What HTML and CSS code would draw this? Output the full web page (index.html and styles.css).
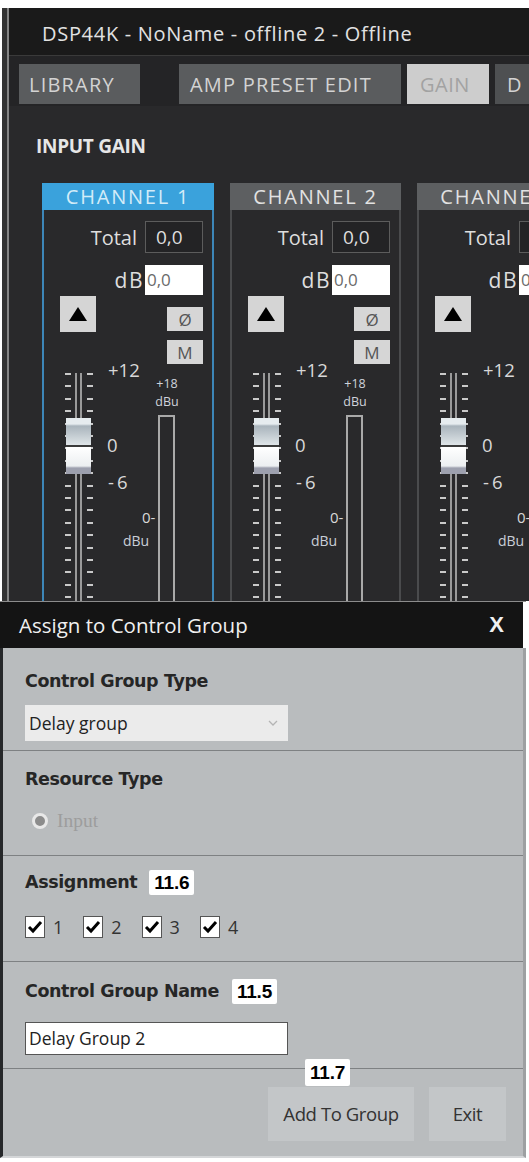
FILE: index.html
```html
<!DOCTYPE html>
<html lang="en">
<head>
    <meta charset="UTF-8">
    <meta name="viewport" content="width=device-width, initial-scale=1.0">
    <title>DSP44K - Assign to Control Group</title>
    <link rel="stylesheet" href="styles.css">
</head>
<body>
    <div class="app">
        <div class="app-inner">
            <div class="titlebar">DSP44K - NoName - offline 2 - Offline</div>
            <div class="tabs">
                <div class="tab tab-library">LIBRARY</div>
                <div class="tab tab-amp">AMP PRESET EDIT</div>
                <div class="tab tab-gain">GAIN</div>
                <div class="tab tab-more">D</div>
            </div>
            <div class="gain-panel">
                <h3 class="panel-title">INPUT GAIN</h3>
                <div class="channels">

                    <div class="channel active">
                        <div class="ch-header">CHANNEL 1</div>
                        <div class="ch-body">
                            <div class="ch-row">
                                <span class="ch-label">Total</span>
                                <span class="total-box">0,0</span>
                            </div>
                            <div class="ch-row ch-row-db">
                                <span class="ch-label">dB</span>
                                <span class="db-input">0,0</span>
                            </div>
                            <div class="ch-controls">
                                <span class="up-btn"><svg width="20" height="16" viewBox="0 0 20 16"><path d="M10 1 L19 15 L1 15 Z" fill="#000"/></svg></span>
                                <div class="small-btns">
                                    <span class="small-btn">Ø</span>
                                    <span class="small-btn">M</span>
                                </div>
                            </div>
                            <div class="fader">
                                <div class="ticks ticks-left"></div>
                                <div class="rail"></div>
                                <div class="ticks ticks-right"></div>
                                <div class="knob"></div>
                                <span class="scale s-12">+12</span>
                                <span class="scale s-0">0</span>
                                <span class="scale s-6">-6</span>
                                <span class="meter-top">+18<br>dBu</span>
                                <div class="meter"></div>
                                <span class="meter-zero">0-</span>
                                <span class="meter-unit">dBu</span>
                            </div>
                        </div>
                    </div>

                    <div class="channel">
                        <div class="ch-header">CHANNEL 2</div>
                        <div class="ch-body">
                            <div class="ch-row">
                                <span class="ch-label">Total</span>
                                <span class="total-box">0,0</span>
                            </div>
                            <div class="ch-row ch-row-db">
                                <span class="ch-label">dB</span>
                                <span class="db-input">0,0</span>
                            </div>
                            <div class="ch-controls">
                                <span class="up-btn"><svg width="20" height="16" viewBox="0 0 20 16"><path d="M10 1 L19 15 L1 15 Z" fill="#000"/></svg></span>
                                <div class="small-btns">
                                    <span class="small-btn">Ø</span>
                                    <span class="small-btn">M</span>
                                </div>
                            </div>
                            <div class="fader">
                                <div class="ticks ticks-left"></div>
                                <div class="rail"></div>
                                <div class="ticks ticks-right"></div>
                                <div class="knob"></div>
                                <span class="scale s-12">+12</span>
                                <span class="scale s-0">0</span>
                                <span class="scale s-6">-6</span>
                                <span class="meter-top">+18<br>dBu</span>
                                <div class="meter"></div>
                                <span class="meter-zero">0-</span>
                                <span class="meter-unit">dBu</span>
                            </div>
                        </div>
                    </div>

                    <div class="channel">
                        <div class="ch-header">CHANNEL 3</div>
                        <div class="ch-body">
                            <div class="ch-row">
                                <span class="ch-label">Total</span>
                                <span class="total-box">0,0</span>
                            </div>
                            <div class="ch-row ch-row-db">
                                <span class="ch-label">dB</span>
                                <span class="db-input">0,0</span>
                            </div>
                            <div class="ch-controls">
                                <span class="up-btn"><svg width="20" height="16" viewBox="0 0 20 16"><path d="M10 1 L19 15 L1 15 Z" fill="#000"/></svg></span>
                                <div class="small-btns">
                                    <span class="small-btn">Ø</span>
                                    <span class="small-btn">M</span>
                                </div>
                            </div>
                            <div class="fader">
                                <div class="ticks ticks-left"></div>
                                <div class="rail"></div>
                                <div class="ticks ticks-right"></div>
                                <div class="knob"></div>
                                <span class="scale s-12">+12</span>
                                <span class="scale s-0">0</span>
                                <span class="scale s-6">-6</span>
                                <span class="meter-top">+18<br>dBu</span>
                                <div class="meter"></div>
                                <span class="meter-zero">0-</span>
                                <span class="meter-unit">dBu</span>
                            </div>
                        </div>
                    </div>

                </div>
            </div>
        </div>
    </div>

    <div class="dialog">
        <div class="dialog-title">
            <span>Assign to Control Group</span>
            <span class="close">X</span>
        </div>
        <div class="dialog-body">
            <section class="dsec sec-type">
                <div class="dlabel">Control Group Type</div>
                <div class="select">
                    <span>Delay group</span>
                    <svg width="10" height="6" viewBox="0 0 10 6"><path d="M1 1 L5 5 L9 1" fill="none" stroke="#b4b4b4" stroke-width="1.3"/></svg>
                </div>
            </section>

            <section class="dsec sec-resource">
                <div class="dlabel">Resource Type</div>
                <div class="radio-row">
                    <span class="radio"></span>
                    <span class="radio-text">Input</span>
                </div>
            </section>

            <section class="dsec sec-assign">
                <div class="dlabel">Assignment <span class="badge">11.6</span></div>
                <div class="check-row">
                    <label class="check"><span class="box"><svg width="16" height="14" viewBox="0 0 16 14"><path d="M2 7 L6 11 L14 2" fill="none" stroke="#000" stroke-width="3"/></svg></span>1</label>
                    <label class="check"><span class="box"><svg width="16" height="14" viewBox="0 0 16 14"><path d="M2 7 L6 11 L14 2" fill="none" stroke="#000" stroke-width="3"/></svg></span>2</label>
                    <label class="check"><span class="box"><svg width="16" height="14" viewBox="0 0 16 14"><path d="M2 7 L6 11 L14 2" fill="none" stroke="#000" stroke-width="3"/></svg></span>3</label>
                    <label class="check"><span class="box"><svg width="16" height="14" viewBox="0 0 16 14"><path d="M2 7 L6 11 L14 2" fill="none" stroke="#000" stroke-width="3"/></svg></span>4</label>
                </div>
            </section>

            <section class="dsec sec-name">
                <div class="dlabel">Control Group Name <span class="badge badge-name">11.5</span></div>
                <div class="name-input">Delay Group 2</div>
            </section>

            <section class="dsec sec-buttons">
                <span class="badge badge-add">11.7</span>
                <span class="dbtn btn-add">Add To Group</span>
                <span class="dbtn btn-exit">Exit</span>
            </section>
        </div>
    </div>
</body>
</html>
```

FILE: styles.css
```css
body {
    margin: 0;
    width: 529px;
    height: 1162px;
    overflow: hidden;
    background-color: #ffffff;
    font-family: "Open Sans", "DejaVu Sans", sans-serif;
}

/* ---- background application window ---- */
.app {
    margin: 8px 0 0 2px;
    height: 593px;
    border-left: 5px solid #333;
    overflow: hidden;
}
.app-inner {
    height: 100%;
    border-left: 2px solid #858585;
    background-color: #29292b;
}
.titlebar {
    height: 44px;
    line-height: 46px;
    padding: 3px 0 0 33px;
    background-color: #1a1a1a;
    border-bottom: 1px solid #3a3a3a;
    color: #e2e2e2;
    font-size: 20px;
    letter-spacing: 0.7px;
    white-space: nowrap;
}
.tabs {
    display: flex;
    height: 50px;
    padding: 8px 0 0 10px;
    box-sizing: border-box;
    background-color: #242426;
    white-space: nowrap;
}
.tab {
    flex-shrink: 0;
    height: 40px;
    line-height: 42px;
    font-size: 20px;
    letter-spacing: 1.2px;
    color: #d3d3d3;
    background-color: #5a5c5e;
    padding-left: 10px;
    box-sizing: border-box;
}
.tab-library { width: 121px; margin-right: 39px; }
.tab-amp { width: 222px; margin-right: 6px; padding-left: 11px; }
.tab-gain { width: 82px; margin-right: 6px; background-color: #cdcdcd; color: #a2a2a2; padding-left: 13px; letter-spacing: 0.5px; }
.tab-more { width: 60px; background-color: #4e5052; padding-left: 12px; }

.gain-panel {
    padding: 28px 0 0 27px;
}
.panel-title {
    margin: 0;
    font-size: 19px;
    font-weight: bold;
    letter-spacing: -0.3px;
    color: #e6e6e6;
    line-height: 24px;
}
.channels {
    display: flex;
    gap: 16px;
    margin-top: 25px;
    margin-left: 6px;
}
.channel {
    flex: 0 0 171px;
    height: 430px;
    border: 2px solid #4a4b4d;
    border-top: none;
    box-sizing: border-box;
}
.channel.active {
    flex-basis: 172px;
    border-color: #3d86b8;
}
.ch-header {
    height: 27px;
    line-height: 28px;
    margin: 0 -2px;
    text-align: center;
    background-color: #5d5f61;
    color: #e2e2e2;
    font-size: 20px;
    letter-spacing: 1.8px;
    white-space: nowrap;
    overflow: hidden;
}
.active .ch-header {
    background-color: #3aa2dc;
    color: #d3ecf8;
}
.ch-body {
    padding: 11px 9px 0 16px;
}
.ch-row {
    display: flex;
    justify-content: flex-end;
    align-items: center;
    gap: 8px;
    height: 32px;
}
.ch-row-db {
    margin-top: 12px;
    height: 30px;
    gap: 1px;
}
.ch-label {
    color: #dedede;
    font-size: 20px;
}
.ch-row-db .ch-label {
    font-size: 21px;
    letter-spacing: 1.5px;
}
.total-box {
    flex-shrink: 0;
    width: 58px;
    height: 32px;
    line-height: 30px;
    box-sizing: border-box;
    border: 1px solid #5c5c5c;
    background-color: #232325;
    color: #dedede;
    font-size: 19px;
    padding-left: 10px;
}
.db-input {
    flex-shrink: 0;
    width: 58px;
    height: 30px;
    line-height: 30px;
    background-color: #ffffff;
    color: #6a6a6a;
    font-size: 17px;
    padding-left: 2px;
    box-sizing: border-box;
}
.ch-controls {
    display: flex;
    justify-content: space-between;
    height: 69px;
    margin-top: 1px;
}
.up-btn {
    display: flex;
    align-items: center;
    justify-content: center;
    width: 36px;
    height: 36px;
    background-color: #d5d5d5;
}
.small-btns {
    display: flex;
    flex-direction: column;
    gap: 9px;
    padding-top: 11px;
}
.small-btn {
    width: 36px;
    height: 24px;
    line-height: 25px;
    text-align: center;
    background-color: #d6d6d6;
    color: #555;
    font-size: 17px;
}

/* fader and meter */
.fader {
    position: relative;
    height: 240px;
    color: #d8d8d8;
}
.ticks {
    position: absolute;
    top: 8px;
    width: 6px;
    height: 232px;
    background: repeating-linear-gradient(to bottom, #c9c9c9 0 2px, transparent 2px 12.4px);
}
.ticks-left { left: 5px; }
.ticks-right { left: 27px; }
.rail {
    position: absolute;
    top: 8px;
    left: 15px;
    width: 3px;
    height: 232px;
    border-left: 2px solid #9a9a9a;
    border-right: 2px solid #9a9a9a;
}
.knob {
    position: absolute;
    top: 53px;
    left: 6px;
    width: 25px;
    height: 56px;
    background: linear-gradient(to bottom,
        #e6ecef 0, #e6ecef 6px,
        #a9b4bc 8px, #dfe5e8 27px,
        #3a3a3a 27px, #3a3a3a 29px,
        #ffffff 29px, #eceff1 48px,
        #9da0ae 50px, #9da0ae 56px);
}
.scale {
    position: absolute;
    left: 48px;
    font-size: 18.5px;
    line-height: 22px;
}
.s-12 { top: -6px; }
.s-0 { top: 69px; left: 47px; }
.s-6 { top: 106px; letter-spacing: 3px; }
.meter-top {
    position: absolute;
    top: 10px;
    left: 92px;
    width: 30px;
    text-align: center;
    font-size: 12.5px;
    line-height: 18px;
    color: #cfd3dc;
}
.meter {
    position: absolute;
    top: 50px;
    left: 98px;
    width: 13px;
    height: 200px;
    border: 2px solid #a9a9a9;
    border-bottom: none;
}
.meter-zero {
    position: absolute;
    top: 142px;
    left: 82px;
    font-size: 15px;
    line-height: 20px;
}
.meter-unit {
    position: absolute;
    top: 167px;
    left: 63px;
    font-size: 14px;
    line-height: 18px;
    color: #c9ced8;
}

/* ---- dialog ---- */
.dialog {
    width: 526px;
    height: 561px;
    border-top: 1px solid #8c8c8c;
    box-sizing: border-box;
}
.dialog-title {
    display: flex;
    justify-content: space-between;
    align-items: center;
    height: 46px;
    width: 523px;
    padding: 0 19px 0 19px;
    box-sizing: border-box;
    background-color: #141414;
    color: #f0f0f0;
    font-size: 20.5px;
}
.close {
    font-family: "Liberation Sans", Arial, sans-serif;
    font-weight: bold;
    font-size: 22px;
}
.dialog-body {
    height: 510px;
    border-left: 3px solid #26282a;
    border-right: 3px solid #9da0a2;
    border-bottom: 2px solid #d4d6d8;
    background-color: #b9bcbe;
    box-sizing: border-box;
}
.dsec {
    padding: 0 22px;
    border-bottom: 1px solid #7e8183;
    position: relative;
}
.dlabel {
    display: flex;
    align-items: center;
    gap: 12px;
    height: 26px;
    font-family: "DejaVu Sans", sans-serif;
    font-weight: bold;
    font-size: 17.5px;
    letter-spacing: -0.4px;
    color: #262626;
}
.badge {
    background-color: #ffffff;
    color: #000;
    font-family: "Liberation Sans", Arial, sans-serif;
    font-weight: bold;
    font-size: 19px;
    letter-spacing: -0.2px;
    line-height: 25px;
    padding: 0 5px;
    border-radius: 2px;
}
.badge-name { margin-left: 1px; }

.sec-type { height: 103px; padding-top: 20px; box-sizing: border-box; }
.select {
    display: flex;
    justify-content: space-between;
    align-items: center;
    width: 263px;
    height: 36px;
    margin-top: 11px;
    padding: 0 10px 0 4px;
    box-sizing: border-box;
    background-color: #ebebeb;
    color: #222;
    font-size: 17.5px;
}

.sec-resource { height: 105px; padding-top: 15px; box-sizing: border-box; }
.radio-row {
    display: flex;
    align-items: center;
    gap: 9px;
    height: 26px;
    margin-top: 16px;
    padding-left: 7px;
}
.radio {
    width: 10px;
    height: 10px;
    border-radius: 50%;
    background-color: #8c8c8c;
    border: 3px solid #e8e8e8;
}
.radio-text {
    font-family: "Liberation Serif", serif;
    font-size: 19.5px;
    color: #9d9d9d;
}

.sec-assign { height: 106px; padding-top: 13px; box-sizing: border-box; }
.check-row {
    display: flex;
    gap: 20px;
    margin-top: 20px;
    height: 24px;
    align-items: center;
}
.check {
    display: flex;
    align-items: center;
    gap: 8px;
    font-size: 18px;
    color: #333;
}
.box {
    display: flex;
    align-items: center;
    justify-content: center;
    width: 18px;
    height: 20px;
    background-color: #fff;
    border: 1px solid #555;
}

.sec-name { height: 107px; padding-top: 16px; box-sizing: border-box; }
.name-input {
    width: 263px;
    height: 33px;
    line-height: 31px;
    margin-top: 18px;
    padding-left: 3px;
    box-sizing: border-box;
    background-color: #fff;
    border: 1px solid #555;
    color: #222;
    font-size: 17.5px;
}

.sec-buttons {
    display: flex;
    justify-content: flex-end;
    gap: 15px;
    height: 87px;
    padding: 18px 17px 0 0;
    box-sizing: border-box;
    border-bottom: none;
}
.dbtn {
    height: 54px;
    line-height: 54px;
    text-align: center;
    background-color: #c3c6c8;
    color: #333;
    font-size: 18.5px;
    letter-spacing: -0.4px;
}
.btn-add { width: 146px; }
.btn-exit { width: 77px; }
.badge-add {
    position: absolute;
    top: -10px;
    left: 302px;
    line-height: 27px;
}
```
